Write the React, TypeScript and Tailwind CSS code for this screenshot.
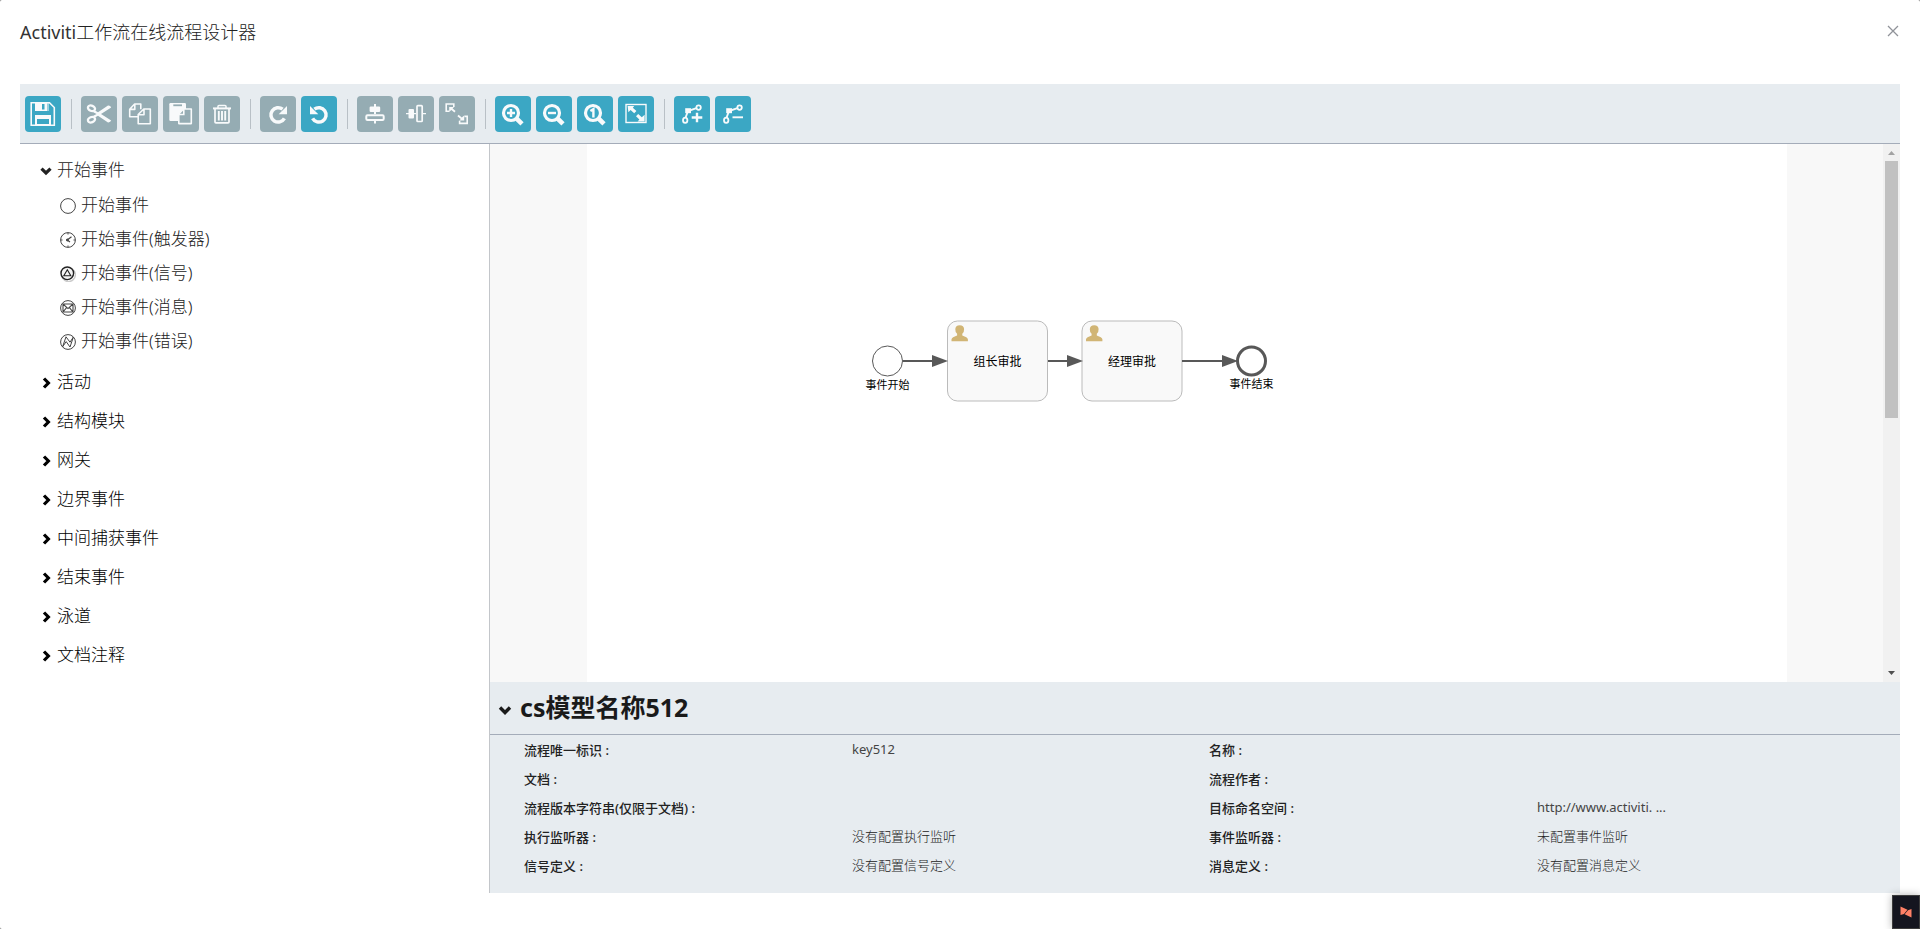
import React, { useState } from "react";

const FONT =
  "font-['Noto_Sans','Noto_Sans_CJK_SC',sans-serif]";

type IconProps = { children: React.ReactNode };

function ToolSvg({ children }: IconProps) {
  return (
    <svg viewBox="0 0 36 36" className="size-9" fill="none" stroke="#f8fafb" strokeWidth="1.6" aria-hidden="true">
      {children}
    </svg>
  );
}

const W = "#f8fafb";

const SaveIcon = (
  <ToolSvg>
    <path d="M6.2 6.7H24.5L29.3 11.5V29.3H6.2Z" />
    <path d="M10 6.5H22V15H10Z" fill={W} stroke="none" />
    <path d="M17 8H19.5V13.5H17Z" fill="#3ba7c4" stroke="none" />
    <path d="M23 7V15" strokeWidth="1" />
    <path d="M10 19H26V29.5H10Z" fill={W} stroke="none" />
    <path d="M12 23H24V28H12Z" fill="#3ba7c4" stroke="none" />
  </ToolSvg>
);

const CutIcon = (
  <ToolSvg>
    <ellipse cx="10.5" cy="12.3" rx="3.7" ry="2.6" transform="rotate(22 10.5 12.3)" strokeWidth="2.3" />
    <ellipse cx="10.5" cy="23.7" rx="3.7" ry="2.6" transform="rotate(-22 10.5 23.7)" strokeWidth="2.3" />
    <path d="M13 14L17 16.2L27 9.6Q29.4 9.4 30.2 11.4L20 18L30.2 24.6Q29.4 26.6 27 26.4L17 19.8L13 22L12.2 19.8L15.6 18L12.2 16.2Z" fill={W} stroke="none" />
  </ToolSvg>
);

const CopyIcon = (
  <ToolSvg>
    <path d="M16 20.8H7.7V13.2L12.6 8H18.8V13.2M12.8 8V13.4H7.7" strokeLinejoin="round" />
    <path d="M21.8 13H28.3V27.8H16.2V18.5ZM22 13V18.7H16.2" strokeLinejoin="round" />
  </ToolSvg>
);

const PasteIcon = (
  <ToolSvg>
    <rect x="6.3" y="7" width="16.7" height="18" rx="1.2" fill={W} stroke="none" />
    <path d="M10.3 8.4H19V10.2H10.3Z" fill="#95acb3" stroke="none" />
    <path d="M20.5 13H28.3V27.6H15.8V18Z" fill="#95acb3" strokeLinejoin="round" />
    <path d="M20.8 13V18.5H15.8" />
  </ToolSvg>
);

const TrashIcon = (
  <ToolSvg>
    <path d="M9 12.4H27" strokeWidth="2" />
    <path d="M14 12V10.2Q14 9.4 15 9.4H21Q22 9.4 22 10.2V12" strokeWidth="1.5" />
    <path d="M11 13V26Q11 26.8 12 26.8H24Q25 26.8 25 26V13" strokeWidth="1.7" />
    <path d="M14.8 15V24.5M18 15V24.5M21.2 15V24.5" strokeWidth="1.9" />
  </ToolSvg>
);

const RedoIcon = (
  <ToolSvg>
    <path d="M24.4 22.4A7.2 7.2 0 1 1 22.6 13.2" strokeWidth="3.5" />
    <path d="M27 10V18.3H18.7Z" fill={W} stroke="none" />
  </ToolSvg>
);

const UndoIcon = (
  <ToolSvg>
    <path d="M11.6 22.4A7.2 7.2 0 1 0 13.4 13.2" strokeWidth="3.5" />
    <path d="M9 10V18.3H17.3Z" fill={W} stroke="none" />
  </ToolSvg>
);

const AlignVerticalIcon = (
  <ToolSvg>
    <path d="M18 8V18M18 25V27.5" strokeWidth="2" />
    <rect x="12.6" y="10.5" width="10.6" height="5.5" rx="1.2" fill={W} stroke="none" />
    <rect x="9.3" y="19.3" width="17.4" height="4.6" rx="1.2" strokeWidth="2" />
  </ToolSvg>
);

const AlignHorizontalIcon = (
  <ToolSvg>
    <path d="M8 17.7H18M25 17.7H28" strokeWidth="1.2" />
    <rect x="10.5" y="13" width="5.5" height="9.5" rx="1" fill={W} stroke="none" />
    <rect x="19" y="9.7" width="5.2" height="15.8" rx="0.8" strokeWidth="1.7" />
  </ToolSvg>
);

const SameSizeIcon = (
  <ToolSvg>
    <path d="M10.4 15.2H7.2V8H14.8V11" strokeWidth="1.6" />
    <path d="M10.2 11H15L13.6 12.6L16.6 15L15.4 16.4L12.4 14L10.2 15.8Z" fill={W} stroke="none" />
    <path d="M25.4 20.4H28.2V27.4H20.6V24.8" strokeWidth="1.6" />
    <path d="M25.2 24.4H20.4L21.8 23L18.4 20.2L19.6 18.8L22.8 21.6L25.2 19.6Z" fill={W} stroke="none" />
  </ToolSvg>
);

function Lens({ children }: IconProps) {
  return (
    <ToolSvg>
      <circle cx="16" cy="17" r="7.5" strokeWidth="3.2" />
      <path d="M21.5 22.5L27 27.8" strokeWidth="4.6" />
      {children}
    </ToolSvg>
  );
}

const ZoomInIcon = (
  <Lens>
    <path d="M12 17H20M16 13V21" strokeWidth="2.4" />
  </Lens>
);
const ZoomOutIcon = (
  <Lens>
    <path d="M12 17H20" strokeWidth="2.4" />
  </Lens>
);
const ZoomActualIcon = (
  <Lens>
    <path d="M13.4 15L16.4 13.2V21.6" strokeWidth="2.4" />
  </Lens>
);
const ZoomFitIcon = (
  <ToolSvg>
    <rect x="8" y="8.5" width="20" height="18" strokeWidth="1.4" />
    <path d="M9.6 10H16.2L14.8 11.8L18.4 15L16.2 17.2L12.6 14L10.4 16.2Z" fill={W} stroke="none" />
    <path d="M26.6 25.4H19.6L21.4 23.4L18 20.2L20.2 18L23.8 21.2L26.6 18.8Z" fill={W} stroke="none" />
  </ToolSvg>
);

function Bend({ children }: IconProps) {
  return (
    <ToolSvg>
      <path d="M22.5 12.2L14 15L11.6 21.5" strokeWidth="1.9" />
      <path d="M11.2 12.2H17V17.2H11.2Z" fill={W} stroke="none" />
      <circle cx="24.6" cy="11.6" r="2.2" strokeWidth="1.8" />
      <ellipse cx="11.2" cy="24.2" rx="2.2" ry="2.6" strokeWidth="1.8" />
      {children}
    </ToolSvg>
  );
}

const BendAddIcon = (
  <Bend>
    <path d="M17.7 21.5H28.3M23 16.8V26.2" strokeWidth="2.4" />
  </Bend>
);
const BendRemoveIcon = (
  <Bend>
    <path d="M17.5 21.3H28" strokeWidth="1.9" />
  </Bend>
);

type Tool = { label: string; icon: React.ReactNode; active: boolean };

const toolGroups: Tool[][] = [
  [{ label: "保存", icon: SaveIcon, active: true }],
  [
    { label: "剪切", icon: CutIcon, active: false },
    { label: "复制", icon: CopyIcon, active: false },
    { label: "粘贴", icon: PasteIcon, active: false },
    { label: "删除", icon: TrashIcon, active: false },
  ],
  [
    { label: "重做", icon: RedoIcon, active: false },
    { label: "撤销", icon: UndoIcon, active: true },
  ],
  [
    { label: "垂直对齐", icon: AlignVerticalIcon, active: false },
    { label: "水平对齐", icon: AlignHorizontalIcon, active: false },
    { label: "相同大小", icon: SameSizeIcon, active: false },
  ],
  [
    { label: "放大", icon: ZoomInIcon, active: true },
    { label: "缩小", icon: ZoomOutIcon, active: true },
    { label: "实际大小", icon: ZoomActualIcon, active: true },
    { label: "适应屏幕", icon: ZoomFitIcon, active: true },
  ],
  [
    { label: "添加弯曲点", icon: BendAddIcon, active: true },
    { label: "删除弯曲点", icon: BendRemoveIcon, active: true },
  ],
];

function Toolbar() {
  return (
    <div role="toolbar" className="flex h-15 items-center border-b border-[#a4acb9] bg-[#e7ecf0] pl-[5px]">
      {toolGroups.map((group, i) => (
        <React.Fragment key={i}>
          {i > 0 && <span className="mr-[9px] ml-2.5 h-[30px] w-px bg-[#b9c0c6]" />}
          <div className="flex gap-[5px]">
            {group.map((tool) => (
              <button
                key={tool.label}
                type="button"
                aria-label={tool.label}
                className={tool.active ? "size-9 rounded bg-[#3ba7c4]" : "size-9 rounded bg-[#95acb3]"}
              >
                {tool.icon}
              </button>
            ))}
          </div>
        </React.Fragment>
      ))}
    </div>
  );
}

function Chevron({ open }: { open: boolean }) {
  return (
    <svg viewBox="0 0 12 12" className="mt-0.5 size-3 shrink-0" fill="none" stroke="currentColor" strokeWidth="3.2" aria-hidden="true">
      {open ? <path d="M1.5 3.6L6 8L10.5 3.6" /> : <path d="M4 1.5L8.4 6L4 10.5" />}
    </svg>
  );
}

function EventSvg({ children }: { children?: React.ReactNode }) {
  return (
    <svg viewBox="0 0 16 16" className="mt-0.5 size-4 shrink-0" fill="none" stroke="#444" strokeWidth="1" aria-hidden="true">
      <circle cx="8" cy="8" r="7.4" />
      {children}
    </svg>
  );
}

const startEvents = [
  { label: "开始事件", icon: <EventSvg /> },
  {
    label: "开始事件(触发器)",
    icon: (
      <EventSvg>
        <path d="M8 1V2.5M8 13.5V15M1 8H2.5M13.5 8H15" />
        <path d="M11.5 4.8L7.2 8L10 10" strokeWidth="1.2" />
        <circle cx="7.4" cy="8" r="1" fill="#444" />
      </EventSvg>
    ),
  },
  {
    label: "开始事件(信号)",
    icon: (
      <svg viewBox="0 0 16 16" className="mt-0.5 size-4 shrink-0" fill="none" stroke="#222" aria-hidden="true">
        <circle cx="8.6" cy="8.8" r="6.8" stroke="#ccc" strokeWidth="1.4" />
        <circle cx="7.3" cy="7.3" r="6.3" fill="#f4f4f4" strokeWidth="1.4" />
        <path d="M7.3 3.8L10.8 9.8H3.8Z" strokeWidth="1.1" />
      </svg>
    ),
  },
  {
    label: "开始事件(消息)",
    icon: (
      <EventSvg>
        <path d="M3 4H13V12H3ZM3 4L8 8.6L13 4M3 12L6.6 7.6M13 12L9.4 7.6" strokeWidth="1.1" />
      </EventSvg>
    ),
  },
  {
    label: "开始事件(错误)",
    icon: (
      <EventSvg>
        <path d="M2.6 12.8L6 2.8L10 8.2L13.4 3L10 13L6.2 7.6Z" />
      </EventSvg>
    ),
  },
];

const closedGroups = ["活动", "结构模块", "网关", "边界事件", "中间捕获事件", "结束事件", "泳道", "文档注释"];

function Palette() {
  const [open, setOpen] = useState(true);
  return (
    <nav className="w-1/4 shrink-0 border-r border-[#c3c6ca] pt-2 pl-5 text-[17px] font-light">
      <button
        type="button"
        aria-expanded={open}
        onClick={() => setOpen(!open)}
        className="flex h-9 items-center gap-[5px] text-[#222]"
      >
        <Chevron open={open} />
        开始事件
      </button>
      {open && (
        <ul className="mb-1 pl-5 text-[#222]">
          {startEvents.map((item) => (
            <li key={item.label} className="flex h-[34px] items-center gap-[5px]">
              {item.icon}
              {item.label}
            </li>
          ))}
        </ul>
      )}
      <ul className="text-black">
        {closedGroups.map((label) => (
          <li key={label}>
            <button type="button" aria-expanded={false} className="flex h-[39px] items-center gap-[5px]">
              <Chevron open={false} />
              {label}
            </button>
          </li>
        ))}
      </ul>
    </nav>
  );
}

function UserTask({ x, label }: { x: number; label: string }) {
  return (
    <g transform={`translate(${x} 177)`}>
      <rect x="0" y="0" width="100" height="80" rx="10" fill="#f9f9f9" stroke="#bbb" />
      <path
        d="M4 20.2V18.2Q4.4 16.4 9.6 14.6V12.8Q7.6 11 7.8 8Q8 4.2 12.2 4.2Q16.4 4.2 16.6 8Q16.8 11 14.8 12.8V14.6Q20 16.4 20.4 18.2V20.2Z"
        fill="#d1b575"
      />
      <text x="50" y="45" textAnchor="middle" fontSize="12" fill="#000">
        {label}
      </text>
    </g>
  );
}

function Flow({ from, to }: { from: number; to: number }) {
  return (
    <g>
      <path d={`M${from} 217H${to - 12}`} stroke="#585858" strokeWidth="2" />
      <path d={`M${to} 217L${to - 16} 211V223Z`} fill="#585858" />
    </g>
  );
}

function Diagram() {
  return (
    <svg viewBox="0 0 1200 538" className="h-[538px] w-[1200px] max-w-full" fill="none" role="img" aria-label="流程图">
      <circle cx="300.5" cy="217" r="15" fill="#fff" stroke="#585858" />
      <text x="300.5" y="245" textAnchor="middle" fontSize="11" fill="#000">
        事件开始
      </text>
      <UserTask x={360.5} label="组长审批" />
      <UserTask x={495} label="经理审批" />
      <circle cx="664.5" cy="217" r="14" fill="#fff" stroke="#585858" strokeWidth="3" />
      <Flow from={316} to={361} />
      <Flow from={461} to={496} />
      <Flow from={595} to={651} />
      <text x="664.5" y="244" textAnchor="middle" fontSize="11" fill="#000">
        事件结束
      </text>
    </svg>
  );
}

function Canvas() {
  return (
    <div className="flex bg-[#f8f8f8]">
      <div className="flex min-w-0 grow justify-center">
        <div className="bg-white">
          <Diagram />
        </div>
      </div>
      <div className="flex w-[17px] shrink-0 flex-col items-center bg-[#f1f1f1]">
        <svg viewBox="0 0 17 17" className="size-[17px]" aria-hidden="true">
          <path d="M5 11H12L8.5 7Z" fill="#a3a3a3" />
        </svg>
        <div className="h-[257px] w-[13px] bg-[#c1c1c1]" />
        <svg viewBox="0 0 17 17" className="mt-auto size-[17px]" aria-hidden="true">
          <path d="M5 6H12L8.5 10Z" fill="#505050" />
        </svg>
      </div>
    </div>
  );
}

type Property = { name: string; value?: string; latin?: boolean };

const properties: Property[] = [
  { name: "流程唯一标识 :", value: "key512", latin: true },
  { name: "名称 :" },
  { name: "文档 :" },
  { name: "流程作者 :" },
  { name: "流程版本字符串(仅限于文档) :" },
  { name: "目标命名空间 :", value: "http://www.activiti. ...", latin: true },
  { name: "执行监听器 :", value: "没有配置执行监听" },
  { name: "事件监听器 :", value: "未配置事件监听" },
  { name: "信号定义 :", value: "没有配置信号定义" },
  { name: "消息定义 :", value: "没有配置消息定义" },
];

function Properties() {
  return (
    <section className="bg-[#e7ecf0] pb-[13px]">
      <h2 className="flex h-[53px] items-center gap-2 border-b border-[#a4acb9] pl-2 text-[25px] font-bold text-[#1a1a1a]">
        <svg viewBox="0 0 14 14" className="mt-1 size-3.5" fill="none" stroke="currentColor" strokeWidth="3.4" aria-hidden="true">
          <path d="M2 4.5L7 9.5L12 4.5" />
        </svg>
        cs模型名称512
      </h2>
      <dl className="grid grid-cols-[328fr_357fr] pr-1.5 pl-[34px] text-[13px] text-[#222] xl:grid-cols-[328fr_357fr_328fr_357fr]">
        {properties.map(({ name, value, latin }) => (
          <React.Fragment key={name}>
            <dt className="h-[29px] pt-px leading-7 font-medium">{name}</dt>
            <dd className={latin ? "h-[29px] leading-7 text-[#444]" : "h-[29px] leading-7 font-light"}>{value}</dd>
          </React.Fragment>
        ))}
      </dl>
    </section>
  );
}

export default function App() {
  return (
    <div className="min-h-screen bg-[#808080]">
      <div className={`${FONT} min-h-screen rounded-xs bg-white`}>
        <header className="flex h-21 items-start justify-between px-5 pt-[18px]">
          <h1 className="text-[18px] leading-7 font-light text-[#222]">
            <span className="font-normal text-[#333]">Activiti</span>工作流在线流程设计器
          </h1>
          <button type="button" aria-label="关闭" className="mt-1.5">
            <svg viewBox="0 0 14 14" className="size-3.5" stroke="#909399" strokeWidth="1.3" aria-hidden="true">
              <path d="M2 2L12 12M12 2L2 12" />
            </svg>
          </button>
        </header>
        <main className="mx-5">
          <Toolbar />
          <div className="flex">
            <Palette />
            <div className="min-w-0 grow">
              <Canvas />
              <Properties />
            </div>
          </div>
        </main>
      </div>
      <button
        type="button"
        aria-label="助手"
        className="fixed right-0 bottom-0 flex h-[34px] w-7 items-center justify-center border border-[#3c3c3c] bg-[#14151f] shadow-[0_0_8px_rgba(0,0,0,0.3)]"
      >
        <svg viewBox="0 0 12 12" className="size-3" aria-hidden="true">
          <path d="M0.5 0.5L7.5 3.8L4 8L0.5 9Z" fill="#ff8066" />
          <path d="M11.5 11.5V3L8 4.2L4.6 8.2Z" fill="#ff8066" />
        </svg>
      </button>
    </div>
  );
}
